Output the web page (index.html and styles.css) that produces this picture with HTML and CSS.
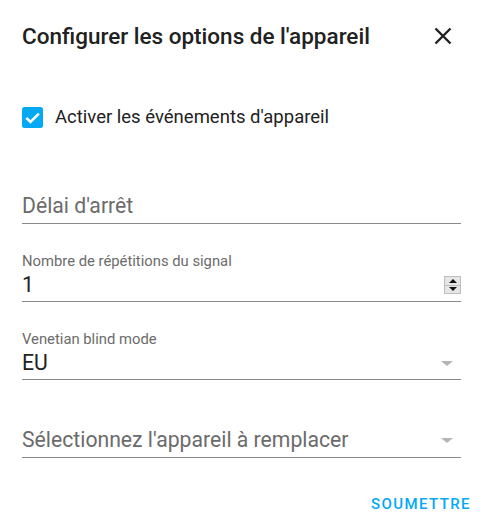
FILE: index.html
```html
<!DOCTYPE html>
<html lang="fr">
<head>
    <meta charset="UTF-8">
    <meta name="viewport" content="width=device-width, initial-scale=1.0">
    <title>Configurer les options de l'appareil</title>
    <link rel="stylesheet" href="styles.css">
</head>
<body>
    <div class="dialog">
        <!-- Header -->
        <div class="dialogHeader">
            <h2 class="dialogTitle">Configurer les options de l'appareil</h2>
            <button class="closeButton" aria-label="Fermer">
                <svg width="18" height="18" viewBox="0 0 18 18">
                    <path d="M1.5 1.5 L16.5 16.5 M16.5 1.5 L1.5 16.5" stroke="#212121" stroke-width="2.4" fill="none"/>
                </svg>
            </button>
        </div>

        <!-- Checkbox -->
        <label class="checkRow">
            <span class="checkBox">
                <svg width="21" height="21" viewBox="0 0 21 21">
                    <rect x="0" y="0" width="21" height="21" rx="2.5" fill="#03a9f4"/>
                    <path d="M4.3 10.8 L8.5 15 L16.8 6.6" stroke="#fff" stroke-width="2.6" fill="none"/>
                </svg>
            </span>
            <span class="checkLabel">Activer les événements d'appareil</span>
        </label>

        <!-- Field 1 -->
        <div class="field firstField">
            <div class="fieldRow emptyRow">
                <span class="fieldValue placeholder">Délai d'arrêt</span>
            </div>
        </div>

        <!-- Field 2 -->
        <div class="field">
            <div class="fieldLabel">Nombre de répétitions du signal</div>
            <div class="fieldRow">
                <span class="fieldValue">1</span>
                <span class="spinner">
                    <span class="spinUp"></span>
                    <span class="spinDown"></span>
                </span>
            </div>
        </div>

        <!-- Field 3 -->
        <div class="field">
            <div class="fieldLabel">Venetian blind mode</div>
            <div class="fieldRow">
                <span class="fieldValue">EU</span>
                <span class="dropArrow"></span>
            </div>
        </div>

        <!-- Field 4 -->
        <div class="field">
            <div class="fieldRow emptyRow">
                <span class="fieldValue placeholder">Sélectionnez l'appareil à remplacer</span>
                <span class="dropArrow"></span>
            </div>
        </div>

        <!-- Actions -->
        <div class="dialogActions">
            <button class="submitButton">Soumettre</button>
        </div>
    </div>
</body>
</html>
```

FILE: styles.css
```css
body {
    font-family: Roboto, "Noto Sans", sans-serif;
    margin: 0;
    background-color: #fff;
    color: #212121;
}

.dialog {
    padding: 0 22px;
}

.dialogHeader {
    display: flex;
    justify-content: space-between;
    align-items: center;
    padding-top: 22px;
}

.dialogTitle {
    margin: 0;
    font-size: 22.5px;
    font-weight: 500;
    line-height: 28px;
    color: #212121;
}

.closeButton {
    background: none;
    border: none;
    padding: 0;
    margin-right: 9px;
    width: 18px;
    height: 18px;
    display: flex;
    cursor: pointer;
}

.checkRow {
    display: flex;
    align-items: center;
    margin-top: 56px;
}

.checkBox {
    display: flex;
    width: 21px;
    height: 21px;
}

.checkLabel {
    font-size: 18.5px;
    line-height: 22px;
    margin-left: 12px;
    color: #212121;
}

.field {
    height: 56px;
    margin-top: 21px;
    border-bottom: 1px solid #8a8a8a;
    display: flex;
    flex-direction: column;
    justify-content: flex-end;
}

.firstField {
    margin-top: 39px;
}

.fieldLabel {
    font-size: 14.8px;
    line-height: 18px;
    color: #6b6b6b;
    margin-bottom: 3px;
}

.fieldRow {
    display: flex;
    justify-content: space-between;
    align-items: center;
    padding-bottom: 4px;
}

.emptyRow {
    padding-bottom: 5px;
}

.fieldValue {
    font-size: 21.2px;
    line-height: 24px;
    color: #212121;
}

.placeholder {
    color: #6b6b6b;
}

.spinner {
    display: flex;
    flex-direction: column;
    width: 17px;
    height: 18px;
    border: 1px solid #bdbdbd;
    background-color: #e6e6e6;
    box-sizing: border-box;
}

.spinUp,
.spinDown {
    flex: 1;
    display: flex;
    justify-content: center;
    align-items: center;
}

.spinDown {
    border-top: 1px solid #bdbdbd;
}

.spinUp::before,
.spinDown::before {
    content: "";
    width: 0;
    height: 0;
    border-left: 4px solid transparent;
    border-right: 4px solid transparent;
}

.spinUp::before {
    border-bottom: 4px solid #111;
}

.spinDown::before {
    border-top: 4px solid #111;
}

.dropArrow {
    width: 0;
    height: 0;
    border-left: 6px solid transparent;
    border-right: 6px solid transparent;
    border-top: 5px solid #b5b5b5;
    margin-right: 8px;
}

.dialogActions {
    display: flex;
    justify-content: flex-end;
    margin-top: 31px;
    margin-right: -10px;
}

.submitButton {
    background: none;
    border: none;
    padding: 6px 0;
    font-family: Roboto, "Noto Sans", sans-serif;
    font-size: 15px;
    font-weight: 500;
    letter-spacing: 1.4px;
    text-transform: uppercase;
    color: #03a9f4;
    cursor: pointer;
}
```
